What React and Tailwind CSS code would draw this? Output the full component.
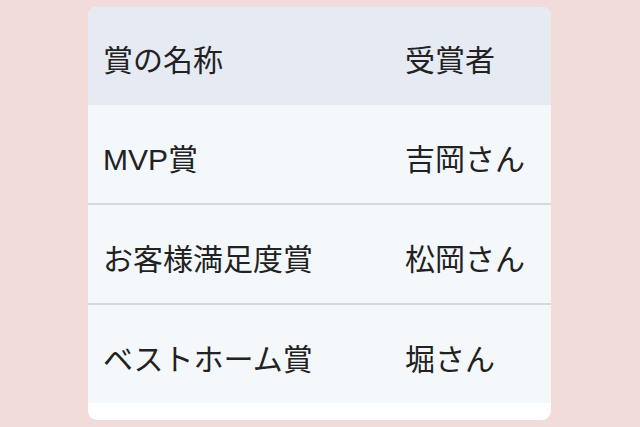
const ROWS = [
  { award: 'MVP賞', winner: '吉岡さん' },
  { award: 'お客様満足度賞', winner: '松岡さん' },
  { award: 'ベストホーム賞', winner: '堀さん' },
];

export default function App() {
  return (
    <div
      className="w-[640px] h-[427px] bg-[#f2dcd9] pt-[7px] pl-[88px] overflow-hidden"
      style={{ fontFamily: '"Liberation Sans", "Noto Sans CJK JP", sans-serif' }}
    >
      <div className="w-[463px] h-[413px] bg-white rounded-[9px] overflow-hidden text-[30px] text-[#222]">
        {/* Header */}
        <div className="flex h-[98px] items-center pt-[8px] bg-[#e5eaf3]">
          <div className="w-[317px] pl-[15px]">賞の名称</div>
          <div className="flex-1">受賞者</div>
        </div>
        {/* Rows */}
        {ROWS.map((r, i) => (
          <div
            key={r.award}
            className={
              i < ROWS.length - 1
                ? 'flex h-[100px] items-center pt-[10px] bg-[#f4f8fb] border-b-[2px] border-[#d4d9de]'
                : 'flex h-[98px] items-center pt-[10px] bg-[#f4f8fb]'
            }
          >
            <div className="w-[317px] pl-[15px]">{r.award}</div>
            <div className="flex-1">{r.winner}</div>
          </div>
        ))}
      </div>
    </div>
  );
}
